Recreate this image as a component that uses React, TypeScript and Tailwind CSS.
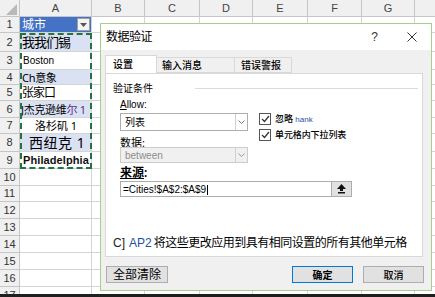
import React from "react";

const colW = [20, 72, 53, 55, 53, 55, 54, 53, 30];
const colN = ["", "A", "B", "C", "D", "E", "F", "G", ""];
const rowH = [16, 19, 18, 15, 16, 17, 16, 18, 17, 17, 16, 17, 17, 17, 17, 17, 17];

function CellA({ r }: { r: number }) {
  switch (r) {
    case 1:
      return (
        <div className="flex h-full w-full items-center bg-[#4472c4] pl-[2px] text-[12px] leading-none text-white">
          <span className="flex-1">城市</span>
          <span className="mr-[1px] flex h-[13px] w-[13px] items-center justify-center border border-[#a0a0a0] bg-[#f4f4f4]">
            <svg width="7" height="4" viewBox="0 0 7 4">
              <polygon points="0,0 7,0 3.5,4" fill="#555" />
            </svg>
          </span>
        </div>
      );
    case 2:
      return <span className="pl-[2px] text-[13px] leading-none tracking-[-1px] text-black">我我们锡</span>;
    case 3:
      return <span className="pl-[3px] text-[10px] leading-none text-black [font-family:'Liberation_Sans',sans-serif]">Boston</span>;
    case 4:
      return <span className="pl-[2px] text-[11px] leading-none tracking-[-0.3px] text-black">Ch意象</span>;
    case 5:
      return <span className="pl-[2px] text-[12px] leading-none tracking-[-1px] text-black">张家口</span>;
    case 6:
      return (
        <span className="whitespace-nowrap pl-[1px] text-[11px] leading-none tracking-[-0.3px] text-black">
          J杰克逊维<span className="text-[#5b2a86]">尔 1</span>
        </span>
      );
    case 7:
      return <span className="pl-[15px] text-[11px] leading-none text-black">洛杉矶 1</span>;
    case 8:
      return <span className="pl-[9px] text-[14px] leading-none tracking-[0.5px] text-black">西纽克 1</span>;
    case 9:
      return (
        <span className="pl-[3px] text-[11px] font-bold leading-none tracking-[0.1px] text-[#111] [font-family:'Liberation_Sans',sans-serif]">
          Philadelphia
        </span>
      );
  }
  return null;
}

function Check() {
  return (
    <span className="flex h-[12px] w-[12px] items-center justify-center border border-[#555] bg-white">
      <svg width="9" height="8" viewBox="0 0 9 8">
        <polyline points="1,4 3.5,6.5 8,1" fill="none" stroke="#333" strokeWidth="1.2" />
      </svg>
    </span>
  );
}

export default function App() {
  return (
    <div className="relative h-[297px] w-[435px] overflow-hidden border-b-[3px] border-[#1f1f1f] bg-white [font-family:'Noto_Sans','Noto_Sans_CJK_SC',sans-serif]">
      {/* header row */}
      <div className="flex h-[17px]">
        {colW.map((w, i) => (
          <div
            key={i}
            style={{ width: w }}
            className="relative flex shrink-0 items-center justify-center border-r border-b border-[#c6c6c6] bg-[#f0f0f0] text-[11px] text-[#444] [font-family:'Liberation_Sans',sans-serif]"
          >
            {i === 0 ? (
              <svg width="20" height="17" viewBox="0 0 20 17" className="absolute inset-0">
                <polygon points="17,4 17,15 6,15" fill="#b9b9b9" />
              </svg>
            ) : (
              colN[i]
            )}
          </div>
        ))}
      </div>
      {rowH.map((h, ri) => {
        const r = ri + 1;
        const band = r >= 2 && r <= 9 && r % 2 === 0;
        return (
          <div key={r} className="flex" style={{ height: h }}>
            {colW.map((w, ci) => (
              <div
                key={ci}
                style={{ width: w }}
                className={
                  ci === 0
                    ? "flex shrink-0 items-center justify-center border-r border-b border-[#c6c6c6] bg-[#f0f0f0] text-[11px] leading-none text-[#333] [font-family:'Liberation_Sans',sans-serif]"
                    : ci === 1
                    ? `flex shrink-0 items-center overflow-hidden whitespace-nowrap border-r border-b border-[#d4d4d4] ${band ? "bg-[#d9e1f2]" : "bg-white"}`
                    : "shrink-0 border-r border-b border-[#d4d4d4]"
                }
              >
                {ci === 0 ? r : ci === 1 ? <CellA r={r} /> : null}
              </div>
            ))}
          </div>
        );
      })}

      {/* marching ants around A2:A9 */}
      <div className="pointer-events-none absolute top-[33px] left-[20px] h-[136px] w-[72px] border-2 border-dashed border-[#217346]" />

      {/* dialog */}
      <div className="absolute top-[23px] left-[100px] flex h-[268px] w-[332px] flex-col border border-[#a8d08d] bg-[#f0f0f0]">
        <div className="flex h-[26px] shrink-0 items-center bg-white pl-[5px] pr-[14px] text-[12px] text-black">
          <span className="flex-1 tracking-[-0.5px]">数据验证</span>
          <span className="mr-[29px] text-[12px] text-[#333] [font-family:'Liberation_Sans',sans-serif]">?</span>
          <svg width="10" height="10" viewBox="0 0 10 10">
            <line x1="0.5" y1="0.5" x2="9.5" y2="9.5" stroke="#333" strokeWidth="1" />
            <line x1="9.5" y1="0.5" x2="0.5" y2="9.5" stroke="#333" strokeWidth="1" />
          </svg>
        </div>
        <div className="flex flex-1 flex-col pt-[6px] pl-[4px]">
          {/* tabs */}
          <div className="relative z-10 flex h-[17px] items-end">
            <div className="flex h-[18px] w-[52px] items-center border border-b-0 border-[#d9d9d9] bg-white pl-[7px] text-[10px] font-medium text-black">
              设置
            </div>
            <div className="flex h-[16px] w-[78px] items-center border border-l-0 border-[#d9d9d9] bg-[#f0f0f0] pl-[5px] text-[10px] font-medium text-black">
              输入消息
            </div>
            <div className="flex h-[16px] w-[57px] items-center border border-l-0 border-[#d9d9d9] bg-[#f0f0f0] pl-[6px] text-[10px] font-medium text-black">
              错误警报
            </div>
          </div>
          {/* panel */}
          <div className="flex h-[184px] w-[318px] flex-col border border-[#d9d9d9] bg-white">
            <div className="mt-[8px] flex h-[12px] items-center pl-[7px] text-[10px] text-black">
              <span>验证条件</span>
              <span className="mr-[4px] ml-auto h-px w-[223px] bg-[#dcdcdc]" />
            </div>
            <div className="mt-[4px] flex h-[12px] items-center pl-[14px] text-[10px] text-black [font-family:'Liberation_Sans',sans-serif]">
              <span>
                <span className="underline">A</span>llow:
              </span>
            </div>
            <div className="mt-[3px] flex pl-[14px]">
              <div className="flex w-[128px] flex-col">
                <div className="flex h-[18px] items-center border border-[#adadad] bg-white">
                  <span className="flex-1 pl-[4px] text-[10px] text-black">列表</span>
                  <span className="flex h-full w-[12px] items-center justify-center border-l border-[#d0d0d0]">
                    <svg width="7" height="4" viewBox="0 0 7 4">
                      <polyline points="0.5,0.5 3.5,3.5 6.5,0.5" fill="none" stroke="#777" strokeWidth="1" />
                    </svg>
                  </span>
                </div>
                <div className="mt-[6px] flex h-[10px] items-center text-[11px] leading-none text-black">数据:</div>
                <div className="flex h-[16px] items-center border border-[#cccccc] bg-[#f0f0f0]">
                  <span className="flex-1 pl-[4px] text-[10px] text-[#8c8c8c] [font-family:'Liberation_Sans',sans-serif]">between</span>
                  <span className="flex h-full w-[12px] items-center justify-center border-l border-[#d0d0d0]">
                    <svg width="7" height="4" viewBox="0 0 7 4">
                      <polyline points="0.5,0.5 3.5,3.5 6.5,0.5" fill="none" stroke="#999" strokeWidth="1" />
                    </svg>
                  </span>
                </div>
              </div>
              <div className="ml-[11px] flex flex-col gap-[4px]">
                <div className="flex h-[12px] items-center gap-[4px]">
                  <Check />
                  <span className="text-[9px] font-medium text-black">
                    忽略 <span className="text-[8px] text-[#2a4fa8] [font-family:'Liberation_Sans',sans-serif]">hank</span>
                  </span>
                </div>
                <div className="flex h-[12px] items-center gap-[4px]">
                  <Check />
                  <span className="text-[9px] font-medium tracking-[-0.1px] text-black">单元格内下拉列表</span>
                </div>
              </div>
            </div>
            <div className="mt-[3px] flex h-[14px] items-center pl-[14px] text-[12px] font-semibold leading-none text-black">
              <span className="underline">来源</span>:
            </div>
            <div className="mt-[1px] ml-[14px] flex h-[16px] w-[232px] items-center border border-[#adadad] bg-white">
              <span className="flex-1 pl-[2px] text-[10px] text-black [font-family:'Liberation_Sans',sans-serif]">
                =Cities!$A$2:$A$9<span className="ml-px inline-block h-[10px] w-px bg-black align-middle" />
              </span>
              <span className="flex h-full w-[20px] items-center justify-center border-l border-[#adadad] bg-[#e1e1e1]">
                <svg width="9" height="10" viewBox="0 0 9 10">
                  <polygon points="4.5,0 9,5 6,5 6,7 3,7 3,5 0,5" fill="#111" />
                  <rect x="1" y="8" width="7" height="1.5" fill="#111" />
                </svg>
              </span>
            </div>
            <div className="mt-[39px] flex h-[14px] items-center whitespace-nowrap pl-[7px] text-[12px] leading-none text-black">
              <span className="text-[#222] [font-family:'Liberation_Sans',sans-serif]">C]</span>
              <span className="ml-[4px] text-[#1e50a2] [font-family:'Liberation_Sans',sans-serif]">AP2</span>
              <span className="ml-[2px] tracking-[-0.5px]">将这些更改应用到具有相同设置的所有其他单元格</span>
            </div>
          </div>
          {/* buttons */}
          <div className="mt-[9px] flex h-[17px] pr-[7px]">
            <div className="ml-px flex w-[62px] items-center justify-center border border-[#adadad] bg-[#e1e1e1] text-[12px] leading-none text-black">
              全部清除
            </div>
            <div className="ml-auto flex w-[61px] items-center justify-center border border-[#0078d7] bg-[#e1e1e1] text-[10px] font-semibold leading-none text-black">
              确定
            </div>
            <div className="ml-[10px] flex w-[61px] items-center justify-center border border-[#adadad] bg-[#e1e1e1] text-[10px] font-medium leading-none text-black">
              取消
            </div>
          </div>
        </div>
      </div>
    </div>
  );
}
